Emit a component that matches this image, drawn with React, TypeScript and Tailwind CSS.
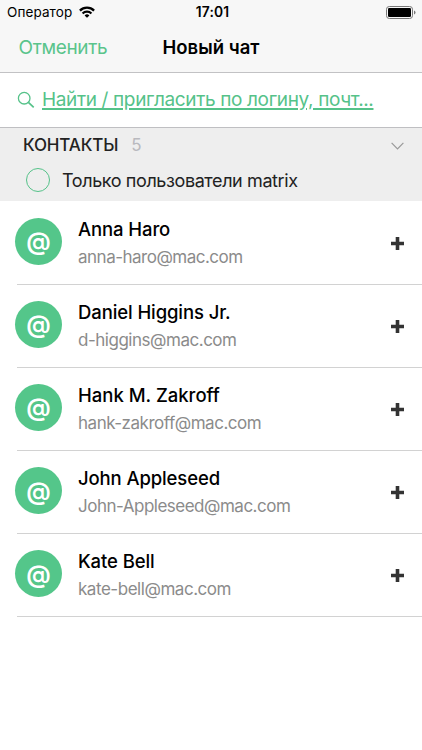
const contacts = [
  { name: "Anna Haro", email: "anna-haro@mac.com", nameCls: "tracking-[-0.1px]", mailCls: "tracking-[-0.5px]" },
  { name: "Daniel Higgins Jr.", email: "d-higgins@mac.com", nameCls: "tracking-[-0.1px]", mailCls: "tracking-[-0.48px]" },
  { name: "Hank M. Zakroff", email: "hank-zakroff@mac.com", nameCls: "tracking-[0px]", mailCls: "tracking-[-0.48px]" },
  { name: "John Appleseed", email: "John-Appleseed@mac.com", nameCls: "tracking-[-0.12px]", mailCls: "tracking-[-0.5px]" },
  { name: "Kate Bell", email: "kate-bell@mac.com", nameCls: "tracking-[-0.1px]", mailCls: "tracking-[-0.46px]" },
];

function WifiIcon() {
  return (
    <svg className="ml-[7px] h-3 w-4" viewBox="0 0 16 12" fill="none" stroke="#000" strokeWidth="2.3">
      <path d="M0.9 4.6A10.2 10.2 0 0 1 15.1 4.6" />
      <path d="M3.6 7.5A6.2 6.2 0 0 1 12.4 7.5" />
      <path d="M8 11.8L5.6 9.4A3.4 3.4 0 0 1 10.4 9.4Z" fill="#000" stroke="none" />
    </svg>
  );
}

function BatteryIcon() {
  return (
    <svg className="h-[13px] w-[30px]" viewBox="0 0 30 13">
      <rect x="0.5" y="0.5" width="26" height="12" rx="2.8" fill="none" stroke="#777" />
      <rect x="2" y="2" width="23" height="9" rx="1.2" fill="#000" />
      <path d="M28 4.5Q29.5 5.2 29.5 6.5T28 8.5Z" fill="#777" />
    </svg>
  );
}

export default function App() {
  return (
    <div className="flex h-[750px] w-[422px] flex-col overflow-hidden bg-white font-['Inter','Noto_Sans',sans-serif] whitespace-nowrap">
      <header className="h-[73px] border-b border-[#c2c2c4] bg-[#f7f7f7]">
        <div className="grid h-6 grid-cols-[1fr_auto_1fr] items-center pr-[6px] pl-[7px] text-[13.5px] leading-6">
          <div className="flex items-center">
            <span className="tracking-[0.1px]">Оператор</span>
            <WifiIcon />
          </div>
          <span className="pl-[2px] text-[13.8px] font-semibold tracking-[0.2px]">17:01</span>
          <div className="flex justify-end">
            <BatteryIcon />
          </div>
        </div>
        <div className="grid h-[47px] grid-cols-[1fr_auto_1fr] items-center px-[18.5px] text-[19px] leading-[47px]">
          <span className="tracking-[-0.35px] text-[#5ac48b]">Отменить</span>
          <h1 className="text-[18.5px] font-semibold">Новый чат</h1>
          <span />
        </div>
      </header>

      <div className="flex h-[55px] items-center border-b border-[#bfbfc2] pl-[17px] text-[#55c289]">
        <svg className="h-[18px] w-[18px]" viewBox="0 0 18 18" fill="none" stroke="currentColor" strokeWidth="1.3">
          <circle cx="7.2" cy="7.2" r="5.8" />
          <path d="M11.4 11.4L16.7 16.3" strokeWidth="1.7" />
        </svg>
        <span className="ml-[7px] text-[19px] tracking-[-0.36px] underline decoration-[1.5px] underline-offset-[2px]">
          Найти / пригласить по логину, почт...
        </span>
      </div>

      <section className="h-[73px] shrink-0 bg-[#eee] text-[#222]">
        <div className="flex h-[35px] items-center pr-[18px] pl-[23px] text-[17px] leading-[35px]">
          <span className="font-medium tracking-[-0.15px]">КОНТАКТЫ</span>
          <span className="ml-[13px] text-[#b9b9be]">5</span>
          <svg className="ml-auto h-2 w-[13px]" viewBox="0 0 13 8" fill="none" stroke="#999" strokeWidth="1.2">
            <path d="M0.6 0.8L6.5 6.8L12.4 0.8" />
          </svg>
        </div>
        <div className="flex h-[34px] items-center pl-[26px]">
          <span className="h-6 w-6 rounded-full border border-[#55c289]" />
          <span className="ml-3 text-[18px] tracking-[-0.4px]">Только пользователи matrix</span>
        </div>
      </section>

      <ul className="pt-px">
        {contacts.map((c) => (
          <li key={c.email} className="flex h-[83.1px] flex-col">
            <div className="flex flex-1 pl-[15px]">
              <span className="mt-4 flex h-[47px] w-[47px] shrink-0 items-center justify-center rounded-full bg-[#54c68a] text-[24.5px] leading-none font-semibold text-white">
                @
              </span>
              <div className="ml-4 flex-1 pt-[14px]">
                <div className={`text-[18.5px] leading-[26px] font-medium text-black ${c.nameCls}`}>{c.name}</div>
                <div className={`mt-[2px] text-[17px] leading-[26px] text-[#8b8b8b] ${c.mailCls}`}>{c.email}</div>
              </div>
              <svg className="mt-[35px] mr-[18px] h-[13px] w-[13px]" viewBox="0 0 13 13" stroke="#333" strokeWidth="3.6">
                <path d="M6.5 0V13M0 6.5H13" />
              </svg>
            </div>
            <div className="ml-[17px] h-px shrink-0 bg-[#d2d2d2]" />
          </li>
        ))}
      </ul>
    </div>
  );
}
